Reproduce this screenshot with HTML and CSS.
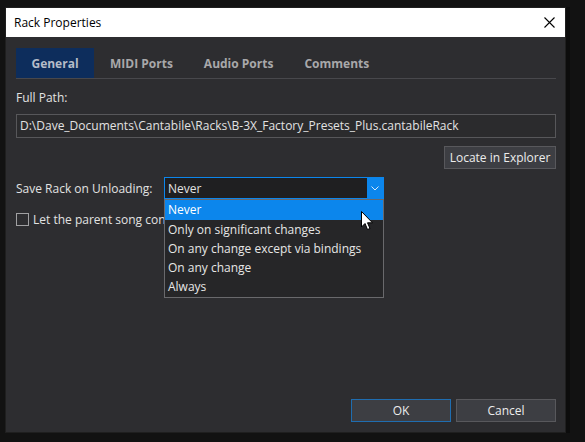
FILE: index.html
```html
<!DOCTYPE html>
<html>
<head>
<meta charset="utf-8">
<link rel="stylesheet" href="styles.css">
</head>
<body>
<div class="dialog">
  <div class="titlebar">
    <span class="title">Rack Properties</span>
    <svg class="close" width="11" height="11" viewBox="0 0 11 11"><path d="M0.5 0.5L10.5 10.5M10.5 0.5L0.5 10.5" stroke="#000" stroke-width="1.1"/></svg>
  </div>
  <div class="content">
    <div class="tabs">
      <div class="tab active">General</div>
      <div class="tab">MIDI Ports</div>
      <div class="tab">Audio Ports</div>
      <div class="tab">Comments</div>
    </div>
    <div class="label">Full Path:</div>
    <div class="input">D:\Dave_Documents\Cantabile\Racks\B-3X_Factory_Presets_Plus.cantabileRack</div>
    <div class="locate-row"><div class="btn locate">Locate in Explorer</div></div>
    <div class="save-row">
      <span class="save-label">Save Rack on Unloading:</span>
      <div class="combo">
        <span class="combo-value">Never</span>
        <span class="combo-arrow"><svg width="8" height="5" viewBox="0 0 8 5"><path d="M0.5 0.5L4 4L7.5 0.5" stroke="#d8e8f8" stroke-width="1" fill="none"/></svg></span>
        <div class="list">
          <div class="item sel">Never</div>
          <div class="item">Only on significant changes</div>
          <div class="item">On any change except via bindings</div>
          <div class="item">On any change</div>
          <div class="item">Always</div>
          <svg class="cursor" width="13" height="20" viewBox="0 0 13 20"><path d="M0.5 0.5L0.5 16L4 12.5L6.5 18.5L9 17.5L6.5 11.8L11.5 11.8Z" fill="#fff" stroke="#000" stroke-width="1"/></svg>
        </div>
      </div>
    </div>
    <div class="check-row">
      <span class="checkbox"></span>
      <span class="check-label">Let the parent song control when this rack is saved</span>
    </div>
    <div class="footer">
      <div class="btn ok">OK</div>
      <div class="btn cancel">Cancel</div>
    </div>
  </div>
</div>
</body>
</html>
```
FILE: styles.css
```css
html, body {
  margin: 0;
  padding: 0;
}
body {
  background: #121212;
  width: 585px;
  height: 442px;
  overflow: hidden;
  font-family: "Open Sans", "Noto Sans", sans-serif;
  font-size: 12px;
  color: #e2e2e2;
  padding: 7px 0 0 5px;
  box-sizing: border-box;
}
.dialog {
  width: 561px;
  height: 426px;
  border: 1px solid #1f1f1f;
  box-sizing: border-box;
  background: #2d2d30;
  display: flex;
  flex-direction: column;
  box-shadow: 4px 0 0 #0c0c0c;
}
.titlebar {
  height: 29px;
  background: #ffffff;
  display: flex;
  align-items: center;
  justify-content: space-between;
  padding: 0 10px 0 8px;
  flex: none;
}
.title {
  color: #000;
  font-size: 12px;
}
.content {
  flex: 1;
  display: flex;
  flex-direction: column;
  padding: 11px 9px 10px 10px;
}
.tabs {
  display: flex;
  height: 30px;
  border-bottom: 1px solid #48484c;
  flex: none;
}
.tab {
  font-weight: bold;
  color: #a8a8aa;
  font-size: 12px;
  display: flex;
  align-items: center;
  padding: 0 16px 0 16px;
}
.tab:nth-child(3) {
  padding-left: 15px;
  padding-right: 15px;
}
.tab.active {
  background: #0d2d5c;
  color: #b5bcc8;
  padding: 0;
  width: 78px;
  box-sizing: border-box;
  justify-content: center;
}
.label {
  margin-top: 10px;
  height: 18px;
  line-height: 18px;
}
.input {
  margin-top: 7px;
  height: 24px;
  line-height: 22px;
  box-sizing: border-box;
  border: 1px solid #57575a;
  background: #2b2b2d;
  padding: 0 3px;
  white-space: nowrap;
  overflow: hidden;
}
.locate-row {
  display: flex;
  justify-content: flex-end;
  margin-top: 8px;
}
.btn {
  background: #3d3e43;
  border: 1px solid #58585c;
  box-sizing: border-box;
  display: flex;
  align-items: center;
  justify-content: center;
  color: #ececec;
  white-space: nowrap;
}
.locate {
  height: 23px;
  width: 112px;
}
.save-row {
  margin-top: 8px;
  display: flex;
  align-items: center;
  height: 22px;
}
.save-label {
  width: 148px;
  flex: none;
}
.combo {
  position: relative;
  width: 220px;
  height: 22px;
  box-sizing: border-box;
  border: 1px solid #0c86ec;
  background: #1f1f21;
  display: flex;
  align-items: center;
}
.combo-value {
  flex: 1;
  padding-left: 3px;
}
.combo-arrow {
  width: 16px;
  height: 20px;
  background: #0c86ec;
  display: flex;
  align-items: center;
  justify-content: center;
}
.list {
  position: absolute;
  left: -1px;
  top: 21px;
  width: 220px;
  box-sizing: border-box;
  border: 1px solid #69696c;
  background: #262628;
  padding: 0 0 1px 0;
  z-index: 5;
}
.item {
  height: 19px;
  line-height: 19px;
  padding-left: 3px;
  color: #e6e6e6;
  white-space: nowrap;
}
.item.sel {
  background: #0c86ec;
  color: #ffffff;
  height: 20px;
  line-height: 20px;
}
.cursor {
  position: absolute;
  left: 196px;
  top: 11px;
}
.check-row {
  margin-top: 13px;
  display: flex;
  align-items: center;
  height: 14px;
}
.checkbox {
  width: 13px;
  height: 13px;
  box-sizing: border-box;
  border: 1px solid #a0a0a2;
  margin-right: 4px;
  flex: none;
}
.check-label {
  white-space: nowrap;
  overflow: hidden;
  width: 131px;
  flex: none;
}
.footer {
  margin-top: auto;
  display: flex;
  justify-content: flex-end;
  gap: 5px;
}
.footer .btn {
  width: 100px;
  height: 23px;
}
.ok {
  border-color: #1f6db0 !important;
}
```
